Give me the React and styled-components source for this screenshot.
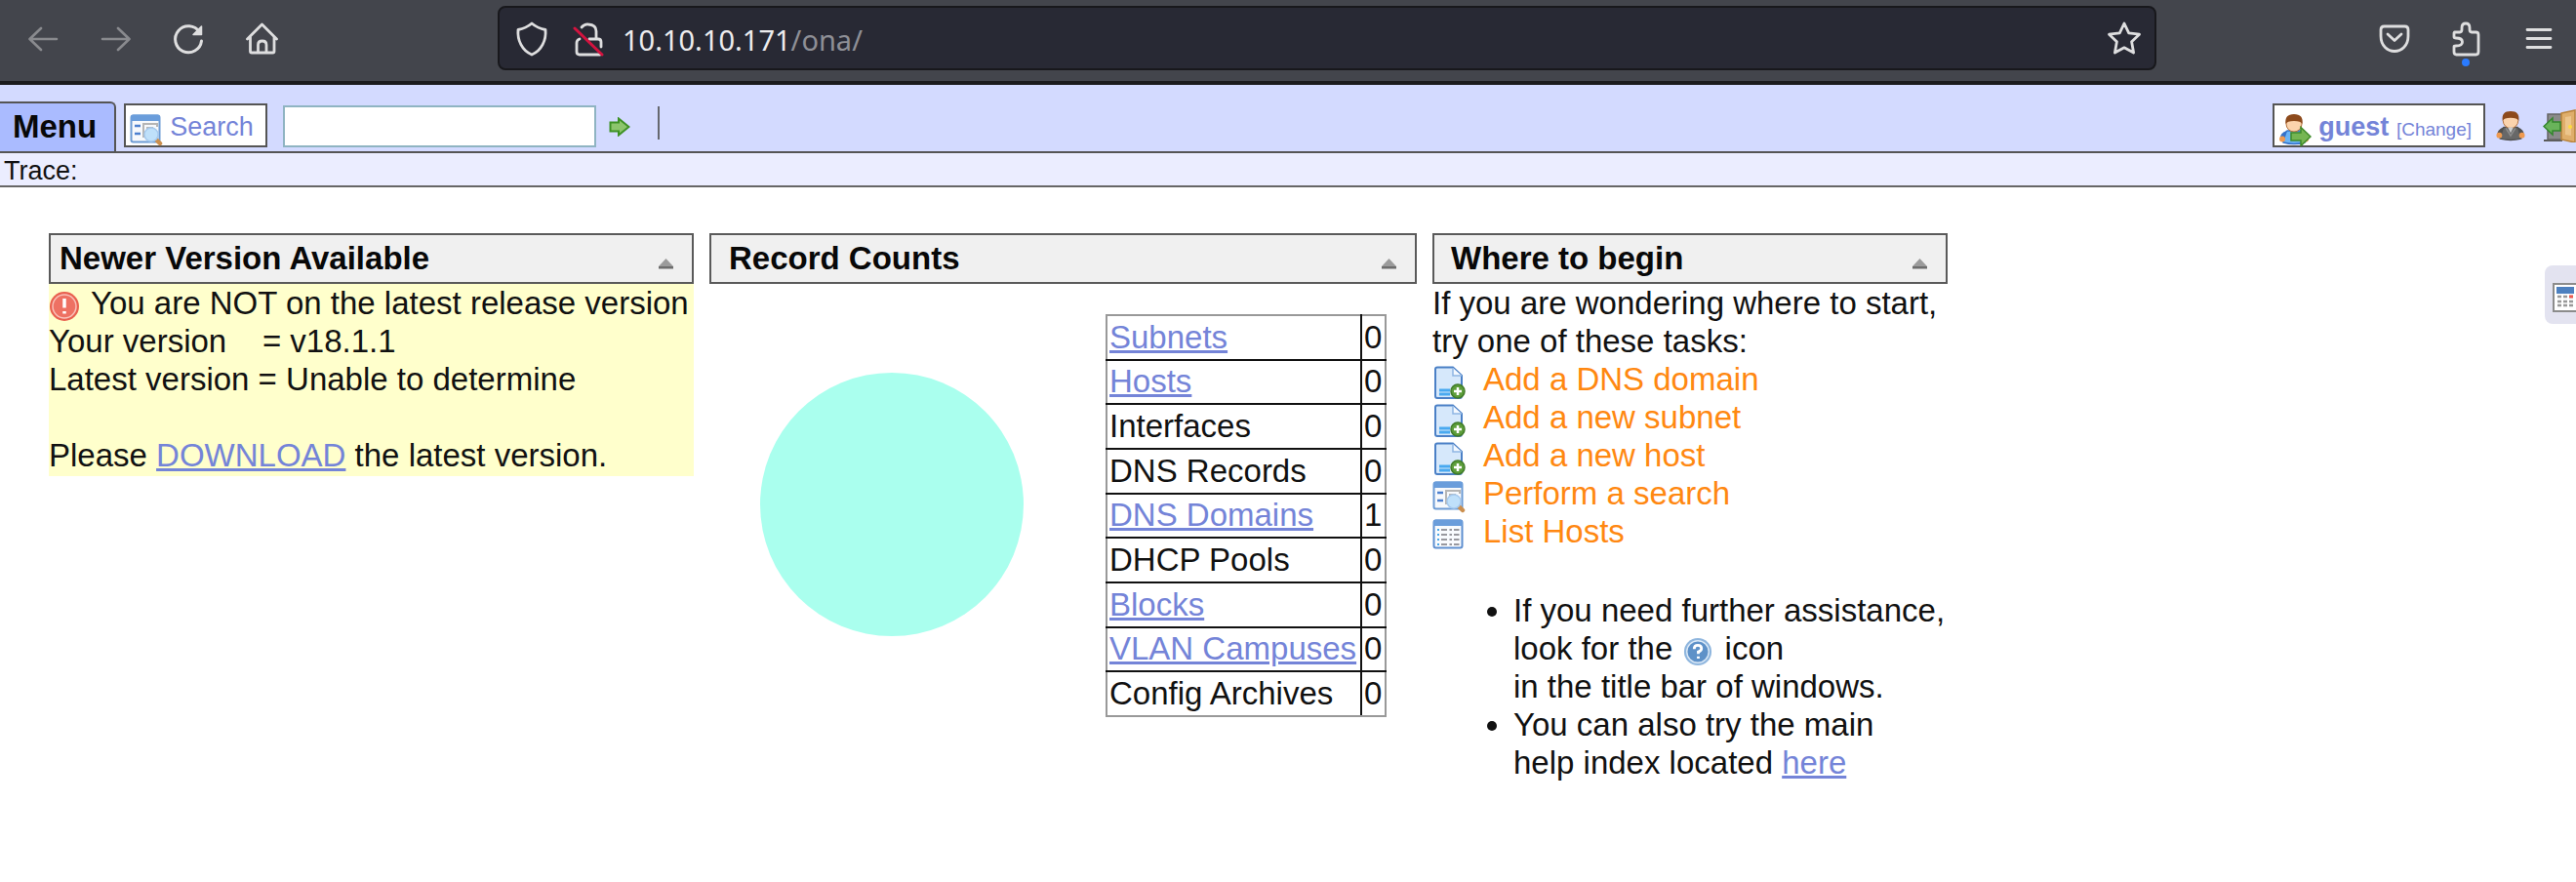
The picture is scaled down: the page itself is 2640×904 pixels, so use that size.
import React from "react";
import styled, { createGlobalStyle } from "styled-components";

const GlobalStyle = createGlobalStyle`
  * { box-sizing: border-box; }
  body {
    margin: 0;
    background: #fff;
    color: #111;
    font: 33px/39px "Liberation Sans", Arial, sans-serif;
  }
  button, input { font: inherit; color: inherit; }
  svg { display: block; flex: none; }
`;

const Page = styled.div`
  min-height: 100vh;
  overflow-x: hidden;
`;

/* Browser toolbar */

const BrowserBar = styled.header`
  display: flex;
  align-items: center;
  height: 87px;
  padding: 0 19px 5px 25px;
  background: #43454c;
  border-bottom: 4px solid #1b1b1e;
`;

const NavGroup = styled.nav`
  display: flex;
  gap: ${(p) => p.$gap}px;
  flex: none;
`;

const ToolButton = styled.button`
  position: relative;
  display: flex;
  padding: 0;
  border: 0;
  background: none;
  color: #dededf;
  opacity: ${(p) => (p.disabled ? 0.45 : 1)};
`;

const AddressBar = styled.div`
  display: flex;
  align-items: center;
  flex: 1;
  height: 66px;
  margin: 0 225px 0 222px;
  padding: 0 12px 0 14px;
  border: 2px solid #18181c;
  border-radius: 8px;
  background: #282934;
`;

const AddressIcons = styled.div`
  display: flex;
  gap: 20px;
  margin-right: 16px;
`;

const Address = styled.div`
  flex: 1;
  padding-top: 3px;
  font: 29px/40px "Noto Sans", sans-serif;
  color: #8e8f96;
`;

const Host = styled.span`
  color: #ececee;
`;

const ExtensionDot = styled.span`
  position: absolute;
  left: 14px;
  top: 40px;
  width: 8px;
  height: 8px;
  border-radius: 50%;
  background: #2a7bff;
`;

/* Application bars */

const AppBar = styled.div`
  display: flex;
  align-items: flex-end;
  height: 70px;
  background: #d3daff;
  border-bottom: 2px solid #555;
`;

const MenuButton = styled.button`
  height: 51px;
  padding: 0 18px 3px 13px;
  border: solid #555;
  border-width: 2px 2px 0 0;
  border-radius: 0 6px 0 0;
  background: #aabbff;
  color: #080808;
  font-weight: bold;
`;

const BoxButton = styled.button`
  display: flex;
  align-items: center;
  gap: 7px;
  height: 45px;
  margin: 0 0 4px ${(p) => p.$before}px;
  padding: 0 12px 0 4px;
  border: 2px solid #555;
  background: #fff;
  color: #7484d8;
  font-size: 27px;
  line-height: 32px;

  svg { margin-top: 8px; }
  span { padding-top: 3px; }
  small { font-size: 19px; line-height: 19px; }
`;

const SearchInput = styled.input`
  width: 321px;
  height: 43px;
  margin: 0 13px 4px 16px;
  padding: 0 8px;
  border: 2px solid #8fb4c2;
  background: #fff;
  font-size: 27px;
`;

const IconButton = styled.button`
  display: flex;
  margin: 0 0 ${(p) => p.$lift}px;
  padding: 0;
  border: 0;
  background: none;
`;

const Divider = styled.span`
  width: 2px;
  height: 34px;
  margin: 0 auto 12px 28px;
  background: #66686f;
`;

const UserTools = styled.div`
  display: flex;
  align-items: flex-end;
  gap: 10px;
  margin-right: -2px;
`;

const UserIcons = styled.div`
  display: flex;
  align-items: flex-end;
  gap: 17px;
`;

const TraceBar = styled.div`
  height: 35px;
  padding: 1px 0 0 4px;
  background: #ebedff;
  border-bottom: 2px solid #666;
  font-size: 27px;
  line-height: 35px;
`;

/* Dashboard */

const Dashboard = styled.main`
  display: flex;
  align-items: flex-start;
  gap: 16px;
  padding: 47px 50px;
`;

const Card = styled.section`
  flex: none;
  min-width: ${(p) => p.$width}px;
`;

const CardHeader = styled.header`
  display: flex;
  align-items: center;
  justify-content: space-between;
  height: 52px;
  padding: 0 18px 2px ${(p) => p.$indent}px;
  border: 2px solid #5a5a5a;
  background: #f0f0f0;
`;

const CardTitle = styled.h2`
  margin: 0;
  color: #080808;
  font-size: 33px;
`;

const CollapseButton = styled.button`
  display: flex;
  padding: 12px 0 0;
  border: 0;
  background: none;
`;

const Notice = styled.div`
  padding-bottom: 2px;
  background: #ffffcc;
  white-space: pre;
`;

const Line = styled.p`
  display: ${(p) => (p.$icon ? "flex" : "block")};
  align-items: center;
  gap: 11px;
  min-height: 39px;
  margin: 0;

  svg { margin-top: 6px; }
`;

const Link = styled.a`
  color: #7484d8;
  text-decoration: underline;
`;

const Counts = styled.div`
  display: flex;
  align-items: flex-start;
  justify-content: space-between;
  padding: 31px 31px 0 52px;
`;

const PieWrap = styled.div`
  padding-top: 60px;
`;

const CountTable = styled.table`
  width: 288px;
  height: 413px;
  border-collapse: collapse;
  border: 2px solid #999;

  th, td {
    padding: 0 2px 1px;
    border: 2px solid #111;
    font-weight: normal;
    text-align: left;
  }
  tr:first-child > * { border-top-color: #999; }
  tr:last-child > * { border-bottom-color: #999; }
  th { border-left-color: #999; }
  td { width: 25px; border-right-color: #999; }
`;

const TaskList = styled.ul`
  margin: 0 0 42px;
  padding: 0;
  list-style: none;
`;

const Task = styled.li`
  display: flex;
  height: 39px;
`;

const TaskLink = styled.a`
  display: flex;
  align-items: center;
  gap: 18px;
  color: #ff8811;
  text-decoration: none;

  svg { margin-top: 7px; }
`;

const TipList = styled.ul`
  margin: 0;
  padding-left: 83px;

  svg {
    display: inline-block;
    margin: 0 3px 0 2px;
    vertical-align: -7px;
  }
`;

const SideTab = styled.button`
  position: fixed;
  top: 272px;
  right: 0;
  display: flex;
  align-items: center;
  width: 32px;
  height: 60px;
  padding: 6px 0 0 8px;
  border: 0;
  border-radius: 8px 0 0 8px;
  background: #e3e3f0;
  overflow: hidden;
`;

/* Icons */

const Stroke = ({ children, width = 2.6, ...rest }) => (
  <svg width="38" height="38" viewBox="0 0 38 38" fill="none" stroke="currentColor"
    strokeWidth={width} strokeLinecap="round" strokeLinejoin="round" aria-hidden="true" {...rest}>
    {children}
  </svg>
);

const BackIcon = () => <Stroke><path d="M33 20H6M17 9L5.500 20L17 31" /></Stroke>;
const ForwardIcon = () => <Stroke><path d="M5 20H32M21 9L32.500 20L21 31" /></Stroke>;
const ReloadIcon = () => (
  <Stroke width="3">
    <path d="M29.500 13A13.500 13.500 0 1 0 31.500 22" />
    <path d="M31.500 7V15.500H23Z" fill="currentColor" strokeWidth="1.500" />
  </Stroke>
);
const HomeIcon = () => (
  <Stroke width="2.800">
    <path d="M3.500 20L18.500 5L33.500 20M6.500 18V32.500Q6.500 34 8 34H29.500Q31 34 31 32.500V18M14.500 34V26Q14.500 22 18.750 22T23 26V34" />
  </Stroke>
);
const ShieldIcon = () => (
  <Stroke width="2.800">
    <path d="M19 4Q25 9 33 10.500C34 21 29 32 19 36C9 32 4 21 5 10.500Q13 9 19 4Z" />
  </Stroke>
);
const LockIcon = () => (
  <Stroke width="2.800">
    <path d="M12 8Q15 4.500 19 5Q27 5.500 27 12V20M20 20H29Q32 20 32 23V28M10 20Q7 21 7 24V33Q7 36 10 36H31" />
    <path d="M5 9L33 36" stroke="#d3133f" strokeWidth="3" />
  </Stroke>
);
const StarIcon = () => (
  <Stroke width="2.800">
    <path d="M19 4L23.700 13.800L34.500 15.200L26.600 22.700L28.600 34L19 28.800L9.400 34L11.400 22.700L3.500 15.200L14.300 13.800Z" />
  </Stroke>
);
const PocketIcon = () => (
  <Stroke width="2.800">
    <path d="M8.500 7H29.500Q33 7 33 10.500V17C33 27 26 32.500 19 32.500C12 32.500 5 27 5 17V10.500Q5 7 8.500 7ZM12 15L19 21.500L26 15" />
  </Stroke>
);
const PuzzleIcon = () => (
  <Stroke width="2.800">
    <path d="M6.500 13H12Q14 13 14 10V8.500Q14 4 18 4T22 8.500V10Q22 13 24 13H28.500Q31 13 31 15.500V33Q31 36 28.500 36H8.500Q6 36 6 33V28Q6 27 8 27Q14.500 27 14.500 23T8 19Q6 19 6 18V14Z" />
  </Stroke>
);
const HamburgerIcon = () => (
  <Stroke width="2.800"><path d="M7 10.500H31M7 19.500H31M7 28.500H31" /></Stroke>
);

const Picture = ({ children, w = 34, h = 34, box = "0 0 34 34", ...rest }) => (
  <svg width={w} height={h} viewBox={box} aria-hidden="true" {...rest}>{children}</svg>
);

const FormSearchIcon = () => (
  <Picture>
    <rect x="1.500" y="2.500" width="29" height="27" rx="2" fill="#f7f9fc" stroke="#6d9bd4" strokeWidth="2" />
    <path d="M1 4Q1 1.500 3.500 1.500H28.500Q31 1.500 31 4V8H1Z" fill="#6a9ddb" />
    <path d="M5 13H11M5 21H11" stroke="#4d80cf" strokeWidth="2.500" />
    <path d="M14 25V11H28V14M17 15H24" fill="none" stroke="#b5b5b5" strokeWidth="2" />
    <path d="M26 26L31 31" stroke="#cb8f4e" strokeWidth="4.500" strokeLinecap="round" />
    <circle cx="22" cy="22" r="7" fill="#bfe0fa" stroke="#a5c9ee" strokeWidth="1.500" />
  </Picture>
);

const ListIcon = () => (
  <Picture>
    <rect x="1.500" y="2.500" width="29" height="28" rx="2" fill="#f9fbfe" stroke="#5f8fd0" strokeWidth="2" />
    <path d="M1 4Q1 1.500 3.500 1.500H28.500Q31 1.500 31 4V8H1Z" fill="#6a9ddb" />
    {[12, 17, 22, 27].map((y) => (
      <g key={y} strokeWidth="2">
        <path d={`M5 ${y}H7`} stroke="#47a6e8" />
        <path d={`M9 ${y}H15M17.500 ${y}H20M22 ${y}H27.500`} stroke="#98989e" />
      </g>
    ))}
  </Picture>
);

const PageAddIcon = () => (
  <Picture>
    <path d="M5 1.500H21L30 10V31Q30 33 28 33H5Q3 33 3 31V3.500Q3 1.500 5 1.500Z" fill="#d6e8fb" stroke="#4b80c6" strokeWidth="2" />
    <path d="M21 2V10H30" fill="#f4f9ff" stroke="#8fb5e3" strokeWidth="1.500" />
    <path d="M7 25H18M7 29H18" stroke="#49a9f0" strokeWidth="3" />
    <circle cx="26" cy="26" r="7" fill="#5c9d3a" stroke="#3f7a28" strokeWidth="1.500" />
    <path d="M26 22V30M22 26H30" stroke="#fff" strokeWidth="2.500" />
  </Picture>
);

const AlertIcon = () => (
  <Picture w={32} h={32} box="0 0 32 32">
    <circle cx="16" cy="16" r="15" fill="#e9604f" />
    <circle cx="16" cy="16" r="12" fill="#ee7163" stroke="#f9c2ba" strokeWidth="1.500" />
    <path d="M16 8V17.500M16 21V23.500" stroke="#fff" strokeWidth="3.500" />
  </Picture>
);

const HelpIcon = () => (
  <Picture w={30} h={30} box="0 0 32 32" role="img" aria-label="help">
    <circle cx="16" cy="16" r="15" fill="#8fb6de" />
    <circle cx="16" cy="16" r="12" fill="#5e91c8" stroke="#dbe9f7" strokeWidth="1.500" />
    <path d="M12 13Q12 9 16 9T20 12.500Q20 15 16.500 16V18.500M16.500 21V23.500" fill="none" stroke="#fff" strokeWidth="3" />
  </Picture>
);

const GoIcon = () => (
  <Picture w={22} h={20} box="0 0 22 20">
    <path d="M1.500 5.500H10V1.500L20.500 10L10 18.500V14.500H1.500Z" fill="#8cc56c" stroke="#3d9124" strokeWidth="2" />
  </Picture>
);

const Person = ({ suit, cuff }) => (
  <g>
    <path d="M5 30Q3 22 9 18H23Q29 22 27 30Q16 33 5 30Z" fill={suit} stroke={cuff} strokeWidth="1.500" />
    <path d="M9 18Q1 20 2 27L6 28ZM23 18Q31 20 30 27L26 28Z" fill={cuff} />
    <circle cx="4" cy="26.500" r="3" fill="#f09a50" />
    <circle cx="28" cy="26.500" r="3" fill="#f09a50" />
    <circle cx="16" cy="11" r="8" fill="#fbd3ad" stroke="#b5713c" strokeWidth="1" />
    <path d="M7.500 11Q6 1 16 1T24.500 11Q23 8 16 8T7.500 11Z" fill="#8d4a1c" />
  </g>
);

const UserSwitchIcon = () => (
  <Picture>
    <Person suit="#6bb4f5" cuff="#3572c9" />
    <path d="M13 20H23V14.500L33 24L23 33.500V28H13Z" fill="#75b552" stroke="#3e8a29" strokeWidth="1.500" />
  </Picture>
);

const UserGrayIcon = () => (
  <Picture w={32} h={32} box="0 0 32 33">
    <Person suit="#686868" cuff="#505050" />
    <path d="M13 18L16 24L19 18Z" fill="#ccc" />
    <path d="M11 19L16 27L21 19" fill="none" stroke="#8d8d8d" strokeWidth="1.500" />
  </Picture>
);

const DoorIcon = () => (
  <Picture w={36} h={34} box="0 0 36 34">
    <path d="M1 32H20" stroke="#5a5a5a" strokeWidth="2" />
    <rect x="5" y="5" width="16" height="26" fill="#8a8a8a" stroke="#666" strokeWidth="1.500" />
    <path d="M19 4L33 1V34L19 31Z" fill="#dfae6b" stroke="#b98238" strokeWidth="1.500" />
    <path d="M23 8L29 7V27L23 26Z" fill="#ecc58c" />
    <circle cx="28" cy="18" r="2" fill="#ffdc3c" />
    <path d="M18 13H10V9L1 17.500L10 26V22H18Z" fill="#69b35a" stroke="#33852d" strokeWidth="1.500" />
  </Picture>
);

const CalculatorIcon = () => (
  <Picture w={28} h={30} box="0 0 28 30">
    <rect x="1" y="1" width="26" height="28" fill="#fff" stroke="#8c8c8c" strokeWidth="2" />
    <rect x="4" y="4" width="18" height="7" fill="#4d80bf" />
    {[14, 19, 23].map((y) => (
      <path key={y} d={`M5 ${y}H9M11 ${y}H15M17 ${y}H21`} stroke="#999" strokeWidth="2.500" />
    ))}
    <path d="M17 14H21" stroke="#ed5b52" strokeWidth="3" />
  </Picture>
);

const CollapseIcon = () => (
  <Picture w={17} h={12} box="0 0 17 12">
    <path d="M8.500 1L16 9V11H1V9Z" fill="#9b9b9b" />
    <path d="M1 9H16V11.500H1Z" fill="#6d6d6d" />
  </Picture>
);

/* Content */

const counts = [
  ["Subnets", 0, true],
  ["Hosts", 0, true],
  ["Interfaces", 0, false],
  ["DNS Records", 0, false],
  ["DNS Domains", 1, true],
  ["DHCP Pools", 0, false],
  ["Blocks", 0, true],
  ["VLAN Campuses", 0, true],
  ["Config Archives", 0, false],
];

const tasks = [
  ["Add a DNS domain", PageAddIcon],
  ["Add a new subnet", PageAddIcon],
  ["Add a new host", PageAddIcon],
  ["Perform a search", FormSearchIcon],
  ["List Hosts", ListIcon],
];

function Panel({ title, indent, width, children }) {
  return (
    <Card $width={width}>
      <CardHeader $indent={indent}>
        <CardTitle>{title}</CardTitle>
        <CollapseButton aria-label={`Collapse ${title}`}><CollapseIcon /></CollapseButton>
      </CardHeader>
      {children}
    </Card>
  );
}

export default function App() {
  return (
    <Page>
      <GlobalStyle />
      <BrowserBar>
        <NavGroup $gap={37}>
          <ToolButton disabled aria-label="Back"><BackIcon /></ToolButton>
          <ToolButton disabled aria-label="Forward"><ForwardIcon /></ToolButton>
          <ToolButton aria-label="Reload"><ReloadIcon /></ToolButton>
          <ToolButton aria-label="Home"><HomeIcon /></ToolButton>
        </NavGroup>
        <AddressBar>
          <AddressIcons>
            <ToolButton aria-label="Tracking protection"><ShieldIcon /></ToolButton>
            <ToolButton aria-label="Connection not secure"><LockIcon /></ToolButton>
          </AddressIcons>
          <Address><Host>10.10.10.171</Host>/ona/</Address>
          <ToolButton aria-label="Bookmark"><StarIcon /></ToolButton>
        </AddressBar>
        <NavGroup $gap={36}>
          <ToolButton aria-label="Pocket"><PocketIcon /></ToolButton>
          <ToolButton aria-label="Extensions"><PuzzleIcon /><ExtensionDot /></ToolButton>
          <ToolButton aria-label="Application menu"><HamburgerIcon /></ToolButton>
        </NavGroup>
      </BrowserBar>

      <AppBar>
        <MenuButton>Menu</MenuButton>
        <BoxButton $before={8}><FormSearchIcon /><span>Search</span></BoxButton>
        <SearchInput type="text" aria-label="Quick search" />
        <IconButton $lift={15} aria-label="Go"><GoIcon /></IconButton>
        <Divider />
        <UserTools>
          <BoxButton $before={0}>
            <UserSwitchIcon />
            <span><b>guest</b> <small>[Change]</small></span>
          </BoxButton>
          <UserIcons>
            <IconButton $lift={10} aria-label="User info"><UserGrayIcon /></IconButton>
            <IconButton $lift={9} aria-label="Log out"><DoorIcon /></IconButton>
          </UserIcons>
        </UserTools>
      </AppBar>
      <TraceBar>Trace:</TraceBar>

      <Dashboard>
        <Panel title="Newer Version Available" indent={9} width={661}>
          <Notice>
            <Line $icon><AlertIcon />You are NOT on the latest release version</Line>
            <Line>{"Your version \u00a0\u00a0 = v18.1.1"}</Line>
            <Line>Latest version = Unable to determine</Line>
            <Line />
            <Line>Please <Link href="#download">DOWNLOAD</Link> the latest version.</Line>
          </Notice>
        </Panel>

        <Panel title="Record Counts" indent={18} width={725}>
          <Counts>
            <PieWrap>
              <svg width="270" height="270" viewBox="0 0 270 270" role="img" aria-label="Record count chart">
                <circle cx="135" cy="135" r="135" fill="#aaffee" />
              </svg>
            </PieWrap>
            <CountTable>
              <tbody>
                {counts.map(([label, value, linked]) => (
                  <tr key={label}>
                    <th scope="row">{linked ? <Link href="#list">{label}</Link> : label}</th>
                    <td>{value}</td>
                  </tr>
                ))}
              </tbody>
            </CountTable>
          </Counts>
        </Panel>

        <Panel title="Where to begin" indent={17} width={528}>
          <Line>If you are wondering where to start,<br />try one of these tasks:</Line>
          <TaskList>
            {tasks.map(([label, Icon]) => (
              <Task key={label}>
                <TaskLink href="#task"><Icon />{label}</TaskLink>
              </Task>
            ))}
          </TaskList>
          <TipList>
            <li>If you need further assistance,<br />look for the <HelpIcon /> icon<br />in the title bar of windows.</li>
            <li>You can also try the main<br />help index located <Link href="#help">here</Link></li>
          </TipList>
        </Panel>
      </Dashboard>

      <SideTab aria-label="Calculator"><CalculatorIcon /></SideTab>
    </Page>
  );
}
